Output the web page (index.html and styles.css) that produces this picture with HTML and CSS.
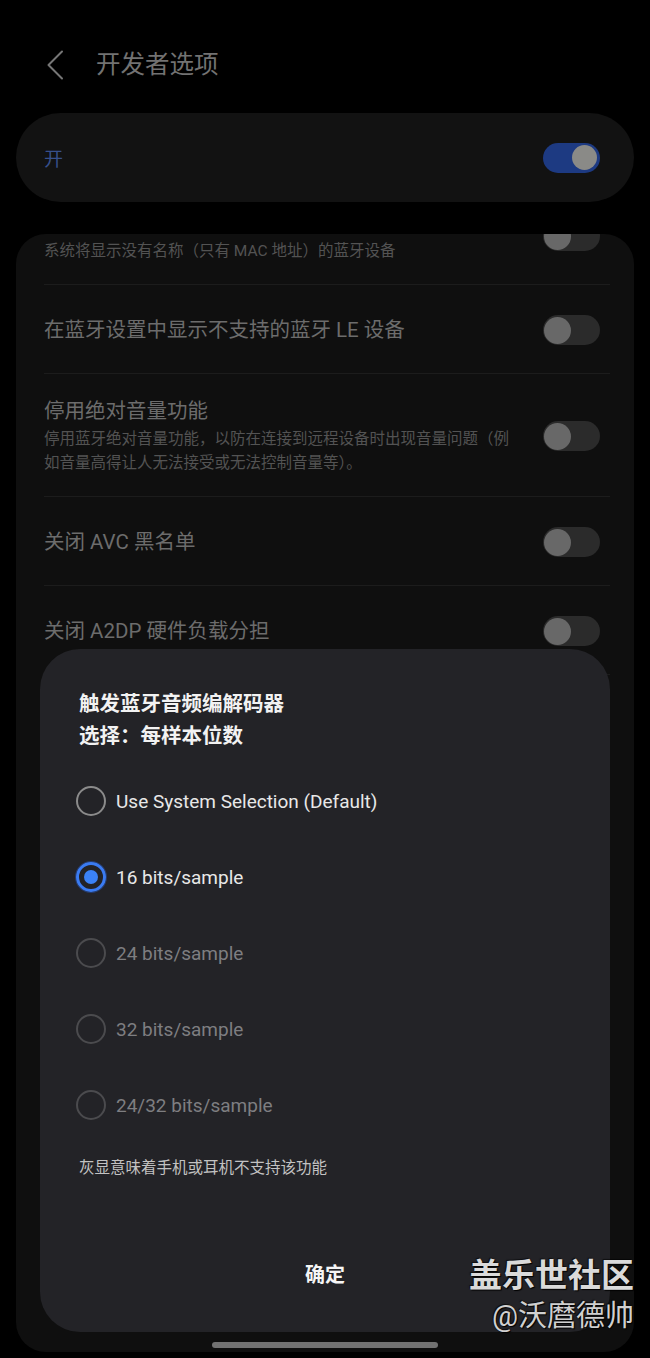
FILE: index.html
```html
<!DOCTYPE html>
<html lang="zh-CN">
<head>
<meta charset="utf-8">
<title>开发者选项</title>
<link rel="stylesheet" href="styles.css">
</head>
<body>
<div class="screen">
  <header class="topbar">
    <svg class="back" width="18" height="30" viewBox="0 0 18 30" aria-hidden="true">
      <path d="M16 1.5 L2.5 15 L16 28.5" fill="none" stroke="#767676" stroke-width="2" stroke-linecap="round" stroke-linejoin="round"/>
    </svg>
    <h1 class="title">开发者选项</h1>
  </header>

  <section class="master">
    <span class="master-label">开</span>
    <span class="switch on"><span class="knob"></span></span>
  </section>

  <section class="list">
    <div class="list-scroll">
      <div class="row">
        <div class="text">
          <div class="row-title">显示没有名称的蓝牙设备</div>
          <div class="row-sub">系统将显示没有名称（只有 MAC 地址）的蓝牙设备</div>
        </div>
        <span class="switch"><span class="knob"></span></span>
      </div>
      <div class="row">
        <div class="text">
          <div class="row-title">在蓝牙设置中显示不支持的蓝牙 LE 设备</div>
        </div>
        <span class="switch"><span class="knob"></span></span>
      </div>
      <div class="row">
        <div class="text">
          <div class="row-title">停用绝对音量功能</div>
          <div class="row-sub">停用蓝牙绝对音量功能，以防在连接到远程设备时出现音量问题（例如音量高得让人无法接受或无法控制音量等）。</div>
        </div>
        <span class="switch"><span class="knob"></span></span>
      </div>
      <div class="row">
        <div class="text">
          <div class="row-title">关闭 AVC 黑名单</div>
        </div>
        <span class="switch"><span class="knob"></span></span>
      </div>
      <div class="row">
        <div class="text">
          <div class="row-title">关闭 A2DP 硬件负载分担</div>
        </div>
        <span class="switch"><span class="knob"></span></span>
      </div>
      <div class="row">
        <div class="text">
          <div class="row-title">蓝牙 AVRCP 版本</div>
          <div class="row-sub">AVRCP 1.5 (Default)</div>
        </div>
      </div>
      <div class="row">
        <div class="text">
          <div class="row-title">触发蓝牙音频编解码器</div>
          <div class="row-sub">SBC</div>
        </div>
      </div>
      <div class="row">
        <div class="text">
          <div class="row-title">蓝牙音频采样率</div>
          <div class="row-sub">Use System Selection (Default)</div>
        </div>
      </div>
      <div class="row">
        <div class="text">
          <div class="row-title">蓝牙音频每样本位数</div>
          <div class="row-sub">16 bits/sample</div>
        </div>
      </div>
      <div class="row">
        <div class="text">
          <div class="row-title">蓝牙音频声道模式</div>
          <div class="row-sub">Use System Selection (Default)</div>
        </div>
      </div>
      <div class="row">
        <div class="text">
          <div class="row-title">蓝牙音频 LDAC 编解码器：播放质量</div>
          <div class="row-sub">Best Effort (Adaptive Bit Rate)</div>
        </div>
      </div>
    </div>
  </section>

  <div class="dialog" role="dialog">
    <div class="dialog-title">触发蓝牙音频编解码器<br>选择：每样本位数</div>
    <ul class="options">
      <li class="option"><span class="radio"></span><span class="opt-label">Use System Selection (Default)</span></li>
      <li class="option"><span class="radio checked"></span><span class="opt-label">16 bits/sample</span></li>
      <li class="option disabled"><span class="radio"></span><span class="opt-label">24 bits/sample</span></li>
      <li class="option disabled"><span class="radio"></span><span class="opt-label">32 bits/sample</span></li>
      <li class="option disabled"><span class="radio"></span><span class="opt-label">24/32 bits/sample</span></li>
    </ul>
    <p class="note">灰显意味着手机或耳机不支持该功能</p>
    <div class="dialog-actions"><span class="ok">确定</span></div>
  </div>

  <div class="watermark">
    <div class="wm-brand">盖乐世社区</div>
    <div class="wm-user">@沃麿德帅</div>
  </div>

  <div class="home-bar"></div>
</div>
</body>
</html>
```

FILE: styles.css
```css
* { box-sizing: border-box; }

html, body {
  margin: 0;
  padding: 0;
  background: #000;
}

body {
  font-family: Roboto, "Noto Sans CJK SC", sans-serif;
  color: #ddd;
}

.screen {
  position: relative;
  width: 650px;
  height: 1358px;
  overflow: hidden;
  background: #000;
}

/* header */
.topbar {
  display: flex;
  align-items: center;
  height: 42px;
  margin-top: 44px;
  padding-left: 46px;
}

.back { display: block; flex: none; }

.title {
  margin: 0 0 0 32px;
  font-size: 24.5px;
  font-weight: 400;
  line-height: 1;
  color: #727272;
}

/* master switch card */
.master {
  display: flex;
  align-items: center;
  justify-content: space-between;
  height: 89px;
  margin: 27px 16px 0;
  padding: 0 34px 0 28px;
  background: #121212;
  border-radius: 45px;
}

.master-label {
  font-size: 19px;
  color: #37508c;
}

/* switches */
.switch {
  position: relative;
  flex: none;
  width: 57px;
  height: 30px;
  border-radius: 15px;
  background: #2b2b2b;
}

.switch .knob {
  position: absolute;
  top: 2px;
  left: 1px;
  width: 27px;
  height: 27px;
  border-radius: 50%;
  background: #686868;
}

.switch.on { background: #1d3a82; }

.switch.on .knob {
  left: auto;
  right: 3px;
  top: 2.5px;
  width: 25px;
  height: 25px;
  background: #8a8a87;
}

/* list card */
.list {
  height: 1118px;
  margin: 32px 16px 0;
  background: #0f0f0f;
  border-radius: 30px;
  overflow: hidden;
}

/* list is scrolled: the first row's title sits under the top edge */
.list-scroll { margin-top: -48px; }

.row {
  display: flex;
  align-items: center;
  gap: 25px;
  min-height: 89px;
  margin: 0 24px 0 28px;
  padding: 23px 10px 21px 0;
  border-bottom: 1px solid #1c1c1c;
}

.text { flex: 1; min-width: 0; }

.row-title {
  font-size: 20.5px;
  line-height: 28px;
  color: #6c6c6c;
}

.row-sub {
  margin-top: 2px;
  font-size: 15.5px;
  line-height: 24px;
  color: #535353;
}

/* dialog */
.dialog {
  position: absolute;
  left: 40px;
  top: 649px;
  width: 570px;
  height: 683px;
  display: flex;
  flex-direction: column;
  padding: 39px 39px 0;
  background: #232327;
  border-radius: 40px;
}

.dialog-title {
  font-size: 20.5px;
  font-weight: 700;
  line-height: 32px;
  color: #f2f2f2;
}

.options {
  list-style: none;
  margin: 11px 0 0 -3px;
  padding: 0;
}

.option {
  display: flex;
  align-items: center;
  height: 76px;
}

.radio {
  display: flex;
  align-items: center;
  justify-content: center;
  flex: none;
  width: 30px;
  height: 30px;
  border: 2.5px solid #8b8b8b;
  border-radius: 50%;
}

.radio.checked {
  border: 3px solid #3a7bf2;
  box-shadow: 0 0 0 1px rgba(40, 80, 170, 0.55);
}

.radio.checked::after {
  content: "";
  width: 14px;
  height: 14px;
  border-radius: 50%;
  background: #3b82f7;
}

.opt-label {
  margin-left: 10px;
  font-size: 19px;
  color: #e8e8e8;
}

.option.disabled .radio { border-color: #4b4b4e; }
.option.disabled .opt-label { color: #7e7e81; }

.note {
  margin: 14px 0 0;
  font-size: 15.5px;
  line-height: 22px;
  color: #c2c2c2;
}

.dialog-actions {
  display: flex;
  align-items: center;
  justify-content: center;
  height: 56px;
  margin-top: auto;
  margin-bottom: 31px;
}

.ok {
  font-size: 20px;
  font-weight: 700;
  color: #f5f5f5;
}

/* watermark */
.watermark {
  position: absolute;
  right: 16px;
  top: 1255px;
  text-align: right;
  color: #dadada;
  text-shadow: 1px 1px 1px #000, -1px -1px 1px rgba(0,0,0,0.6);
}

.wm-brand {
  font-family: "Noto Sans CJK SC", sans-serif;
  font-size: 33px;
  font-weight: 700;
  line-height: 36px;
}

.wm-user {
  margin-top: 7px;
  font-size: 29px;
  font-weight: 400;
  line-height: 36px;
  color: #d0d0d0;
}

/* home indicator */
.home-bar {
  position: absolute;
  left: 212px;
  top: 1342px;
  width: 226px;
  height: 6px;
  border-radius: 3px;
  background: #727272;
}
```
